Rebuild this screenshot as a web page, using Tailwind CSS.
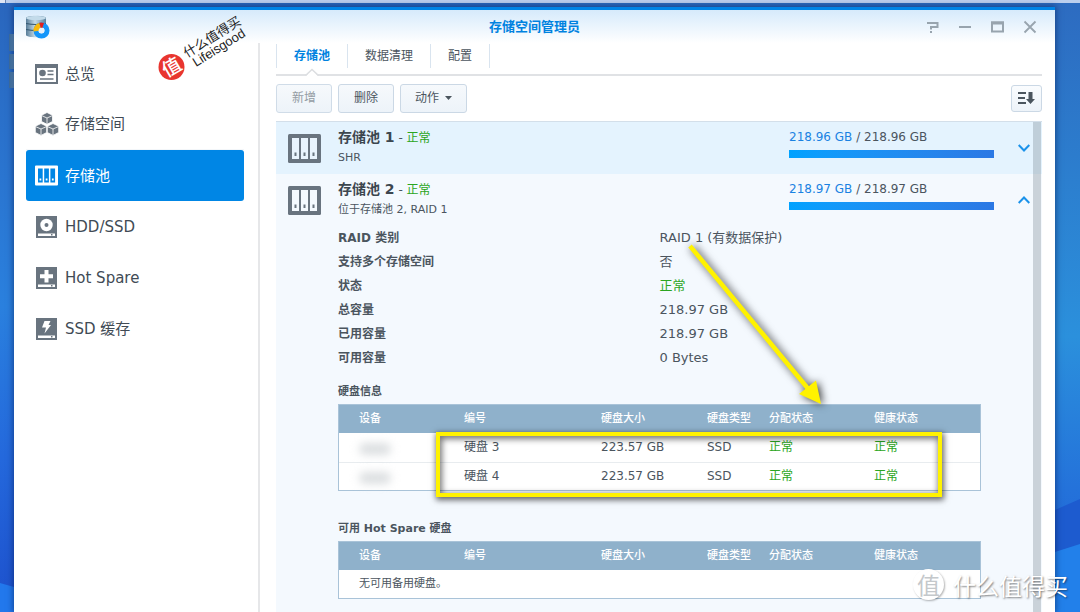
<!DOCTYPE html>
<html lang="zh-CN">
<head>
<meta charset="utf-8">
<meta name="viewport" content="width=device-width, initial-scale=1">
<title>存储空间管理员</title>
<script src="https://cdn.jsdelivr.net/npm/@tailwindcss/browser@4"></script>
</head>
<body class="relative flex h-screen flex-col overflow-hidden bg-[#2a7fdc] font-['DejaVu_Sans','Noto_Sans_CJK_SC',sans-serif] text-xs text-[#4b555e]">

<!-- Desktop wallpaper -->
<svg class="absolute inset-0 h-full w-full" viewBox="0 0 1080 612" preserveAspectRatio="none" aria-hidden="true">
  <defs>
    <linearGradient id="wl" x1="0" y1="0" x2="0" y2="1"><stop offset="0" stop-color="#2a66bd"/><stop offset=".5" stop-color="#2a80de"/><stop offset=".75" stop-color="#2468dc"/><stop offset="1" stop-color="#1d50cc"/></linearGradient>
    <linearGradient id="wr" x1="0" y1="0" x2="0" y2="1"><stop offset="0" stop-color="#2d6bc0"/><stop offset=".55" stop-color="#2b90dc"/><stop offset=".8" stop-color="#2472da"/><stop offset="1" stop-color="#1f5fd6"/></linearGradient>
    <linearGradient id="cyl" x1="0" y1="0" x2="1" y2="0"><stop offset="0" stop-color="#3c6c9c"/><stop offset="1" stop-color="#6d9cc4"/></linearGradient>
  </defs>
  <path fill="url(#wl)" d="M0 0h540v612H0z"/>
  <path fill="url(#wr)" d="M540 0h540v612H540z"/>
  <path fill="#2278ec" d="M0 583l14 4v25H0z"/>
  <path fill="#1d5bcf" d="M1055 510l25-11v46l-25 7z"/>
  <path fill="#2280ea" d="M1055 552l25-8v68h-25z"/>
  <path fill="url(#cyl)" d="M9 34h6v17H9zM9 54h6v15H9zM9 72h6v16H9z"/>
</svg>
<div class="relative flex h-[3px] shrink-0 bg-[#bccfee]"><span class="w-[6px] border-r border-[#6c86b5] bg-[#dfe6f5]"></span></div>

<div class="relative mt-1 mr-[25px] ml-[14px] flex min-h-0 flex-1 flex-col border-t-[3px] border-[#0084e6] bg-white shadow-[0_0_6px_1px_rgba(0,20,70,0.5)]">
  <!-- Title bar -->
  <header class="relative flex h-[33px] shrink-0 items-center justify-between bg-linear-to-b from-[#d6eafb] to-white pr-[18px] pl-3">
    <svg class="h-6 w-6" viewBox="0 0 24 24" aria-hidden="true">
      <defs><linearGradient id="db" x1="0" x2="1" y1="0" y2="0"><stop offset="0" stop-color="#587d98"/><stop offset=".45" stop-color="#c4dae8"/><stop offset="1" stop-color="#5a819d"/></linearGradient></defs>
      <path fill="url(#db)" d="M0 3c0-3 20-3 20 0v17c0 3-20 3-20 0z"/>
      <ellipse cx="10" cy="3" rx="10" ry="2" fill="#c3dbea"/>
      <path d="M0 8.500q10 2 20 0M0 14.500q10 2 20 0" fill="none" stroke="#33566f" stroke-width="1.200"/>
      <circle cx="15.500" cy="15.500" r="5.500" fill="#fff" stroke="#1496fa" stroke-width="5"/>
      <path d="M15.500 15.500L7.500 16.500A8 8 0 0 1 13.300 7.800z" fill="#f8b90c"/>
      <path d="M15.500 15.500L13.300 7.800A8 8 0 0 1 18 8z" fill="#e3201c"/>
      <circle cx="15.500" cy="15.500" r="2.800" fill="#e8f1fa"/>
    </svg>
    <h1 class="absolute inset-x-0 text-center text-[13px] font-bold text-[#0082e0]">存储空间管理员</h1>
    <div class="relative flex items-center gap-[18px] text-[#98a4ae]">
      <button aria-label="帮助"><svg class="block h-[14px] w-[14px]" viewBox="0 0 14 14" fill="none" stroke="currentColor" stroke-width="2"><path d="M0 3h10.500v4H4V9.500M3 12h2"/></svg></button>
      <button aria-label="最小化"><svg class="block h-[14px] w-[14px]" viewBox="0 0 14 14" stroke="currentColor" stroke-width="2"><path d="M0 7h12"/></svg></button>
      <button aria-label="最大化"><svg class="block h-[14px] w-[14px]" viewBox="0 0 14 14" fill="none" stroke="currentColor"><path stroke-width="2" d="M1 2.500h11v9H1z"/><path stroke-width="3" d="M0 3h13"/></svg></button>
      <button aria-label="关闭"><svg class="block h-[14px] w-[14px]" viewBox="0 0 14 14" stroke="currentColor" stroke-width="1.800"><path d="M1.500 1.500l11 11M12.500 1.500l-11 11"/></svg></button>
    </div>
  </header>

  <div class="flex min-h-0 flex-1">
    <!-- Side navigation -->
    <nav class="w-[246px] shrink-0 border-r-2 border-[#e6e7e9] pt-[5px] pr-[14px] pl-3 text-[15px] leading-5 text-[#414b55]">
      <a href="#" class="flex h-[51px] items-center gap-[6px] pl-[9px]">
        <svg class="h-6 w-6" viewBox="0 0 24 24"><path fill="#69747f" d="M0 2h23v20H0z"/><path fill="#fff" d="M2 6h19v14H2z"/><circle cx="7.500" cy="11" r="3.300" fill="#69747f"/><path stroke="#69747f" stroke-width="1.600" d="M12.500 9h6M12.500 12.500h6M5 17h13.500"/></svg>总览</a>
      <a href="#" class="flex h-[51px] items-center gap-[6px] border-b border-[#f3f6f9] pl-[9px]">
        <svg class="h-6 w-6" viewBox="0 0 24 24"><g fill="#69747f" stroke="#fff" stroke-width=".8" stroke-linejoin="round">
          <path d="M12 .5l5.500 2.700v6.300L12 12.300 6.500 9.500V3.200z"/><path fill="none" d="M6.500 3.500L12 6l5.500-2.500M12 6v6"/>
          <path d="M6 11.500l5.700 2.700v6.300L6 23.400.3 20.500v-6.300z"/><path fill="none" d="M.3 14.500L6 17l5.700-2.500M6 17v6"/>
          <path d="M18 11.500l5.700 2.700v6.300L18 23.400l-5.700-2.900v-6.300z"/><path fill="none" d="M12.300 14.500L18 17l5.700-2.500M18 17v6"/></g></svg>存储空间</a>
      <a href="#" aria-current="page" class="flex h-[51px] items-center gap-[6px] rounded-[3px] bg-[#0086e5] pl-[9px] text-white">
        <svg class="h-6 w-6" viewBox="0 0 24 24"><path fill="#fff" d="M1 1.500h21a1 1 0 0 1 1 1v18a1 1 0 0 1-1 1H1a1 1 0 0 1-1-1v-18a1 1 0 0 1 1-1z"/><path fill="#0086e5" d="M3 4.500h4.700v14H3zM9.200 4.500h4.700v14H9.200zM15.400 4.500h4.700v14h-4.700z"/><path fill="#fff" d="M4.500 14.500h1.800v2H4.500zM10.700 14.500h1.800v2h-1.800zM16.900 14.500h1.800v2h-1.800z"/></svg>存储池</a>
      <a href="#" class="flex h-[51px] items-center gap-[6px] pl-[9px]">
        <svg class="h-6 w-6" viewBox="0 0 24 24"><path fill="#69747f" d="M1 1h21v22H1z"/><circle cx="11.500" cy="10" r="6.200" fill="#fff"/><circle cx="11.500" cy="10" r="2" fill="#69747f"/><path fill="#fff" d="M3 18.500h17v2.500H3z"/><path fill="#69747f" d="M16 19h1.500v1.500H16z"/></svg>HDD/SSD</a>
      <a href="#" class="flex h-[51px] items-center gap-[6px] pl-[9px]">
        <svg class="h-6 w-6" viewBox="0 0 24 24"><path fill="#69747f" d="M1 1h21v22H1z"/><path fill="#fff" d="M9.500 4h4v4.200H18v4h-4.500V16.500h-4v-4.300H5v-4h4.500zM3 18.500h17v2.500H3z"/><path fill="#69747f" d="M16 19h1.500v1.500H16z"/></svg>Hot Spare</a>
      <a href="#" class="flex h-[51px] items-center gap-[6px] pl-[9px]">
        <svg class="h-6 w-6" viewBox="0 0 24 24"><path fill="#69747f" d="M1 1h21v22H1z"/><path fill="#fff" d="M9.500 4h6l-2 4H16l-6.500 8.500 1.500-6H7zM3 18.500h17v2.500H3z"/><path fill="#69747f" d="M16 19h1.500v1.500H16z"/></svg>SSD 缓存</a>
    </nav>

    <main class="flex min-w-0 flex-1 flex-col pr-[13px] pl-4">
      <!-- Tabs -->
      <div role="tablist" class="relative flex h-[33px] shrink-0 items-start border-b-2 border-[#e0e2e5] pt-px">
        <button role="tab" aria-selected="true" class="h-6 border-x border-[#d9e4ef] px-[17px] font-bold text-[#0082e0]">存储池</button>
        <button role="tab" aria-selected="false" class="h-6 border-r border-[#d9e4ef] px-[17px]">数据清理</button>
        <button role="tab" aria-selected="false" class="h-6 border-r border-[#d9e4ef] px-[17px]">配置</button>
        <svg class="absolute -bottom-[2px] left-[28px] h-2 w-4" viewBox="0 0 16 8" aria-hidden="true"><path fill="#fff" d="M2 8l6-6 6 6z"/><path fill="none" stroke="#dcdee1" stroke-width="1.500" d="M1.500 7.500L8 1.500l6.500 6"/></svg>
      </div>

      <!-- Toolbar -->
      <div class="flex h-[45px] shrink-0 items-center gap-[6px] pb-px">
        <button disabled class="h-[29px] w-14 rounded-[3px] border border-[#d0dce8] bg-linear-to-b from-[#f6f9fc] to-[#edf3f9] text-[#949ca4]">新增</button>
        <button class="h-[29px] w-14 rounded-[3px] border border-[#cbd8e5] bg-linear-to-b from-[#f6f9fc] to-[#edf3f9]">删除</button>
        <button class="flex h-[29px] w-[67px] items-center justify-center gap-[6px] rounded-[3px] border border-[#cbd8e5] bg-linear-to-b from-[#f6f9fc] to-[#edf3f9]">动作<svg class="h-1 w-[7px]" viewBox="0 0 7 4"><path fill="#4b555e" d="M0 0h7L3.500 4z"/></svg></button>
        <button aria-label="排序" class="ml-auto flex h-[27px] w-[31px] items-center justify-center rounded-[3px] border border-[#cbd8e5] bg-linear-to-b from-[#fafcfe] to-[#edf3f9]"><svg class="h-4 w-[17px]" viewBox="0 0 17 16"><path stroke="#4b555e" stroke-width="2" d="M0 3h8M0 8h7M0 13h8"/><path fill="#4b555e" d="M10.500 2h4v7H17l-4.500 5L8 9h2.500z"/></svg></button>
      </div>

      <!-- Pool list -->
      <div class="relative min-h-0 flex-1 overflow-hidden border-t border-[#d3dfea] bg-[#f4f9fe]">
        <section class="flex h-[52px] items-center bg-[#e4f3fe] pr-3 pl-3">
          <svg class="mr-[17px] h-[29px] w-[33px] shrink-0" viewBox="0 0 33 29" aria-hidden="true"><rect width="33" height="29" rx="1.500" fill="#69747f"/><path fill="#e9f4fd" d="M4 4h7v21H4zM13 4h7v21h-7zM22 4h7v21h-7z"/><path fill="#69747f" d="M6.500 18.500h2V22h-2zM15.500 18.500h2V22h-2zM24.500 18.500h2V22h-2z"/></svg>
          <div class="flex-1 pb-[2px]">
            <h2 class="h-[21px] leading-5"><span class="text-sm leading-5 font-bold text-[#3c464f]">存储池 1</span> - <span class="text-[#2ba521]">正常</span></h2>
            <p class="h-5 text-[11px] leading-5">SHR</p>
          </div>
          <div class="mr-6 w-[205px]">
            <p class="leading-5"><span class="text-[#1a82e2]">218.96 GB</span> / 218.96 GB</p>
            <div class="mt-[3px] mb-3 h-2 bg-linear-to-r from-[#00a2ff] to-[#2b78e4]"></div>
          </div>
          <button aria-label="展开存储池 1"><svg class="block h-2 w-3" viewBox="0 0 12 8" fill="none" stroke="#1a92ea" stroke-width="2"><path d="M.7 1L6 6.500 11.300 1"/></svg></button>
        </section>

        <section class="flex h-[52px] items-center pr-3 pl-3">
          <svg class="mr-[17px] h-[29px] w-[33px] shrink-0" viewBox="0 0 33 29" aria-hidden="true"><rect width="33" height="29" rx="1.500" fill="#69747f"/><path fill="#f4f9fe" d="M4 4h7v21H4zM13 4h7v21h-7zM22 4h7v21h-7z"/><path fill="#69747f" d="M6.500 18.500h2V22h-2zM15.500 18.500h2V22h-2zM24.500 18.500h2V22h-2z"/></svg>
          <div class="flex-1 pb-[2px]">
            <h2 class="h-[21px] leading-5"><span class="text-sm leading-5 font-bold text-[#3c464f]">存储池 2</span> - <span class="text-[#2ba521]">正常</span></h2>
            <p class="h-5 text-[11px] leading-5">位于存储池 2, RAID 1</p>
          </div>
          <div class="mr-6 w-[205px]">
            <p class="leading-5"><span class="text-[#1a82e2]">218.97 GB</span> / 218.97 GB</p>
            <div class="mt-[3px] mb-3 h-2 bg-linear-to-r from-[#00a2ff] to-[#2b78e4]"></div>
          </div>
          <button aria-label="收起存储池 2"><svg class="block h-2 w-3" viewBox="0 0 12 8" fill="none" stroke="#1a92ea" stroke-width="2"><path d="M.7 7L6 1.500 11.300 7"/></svg></button>
        </section>

        <div class="pr-[61px] pl-[62px]">
          <dl class="grid auto-rows-[24px] grid-cols-2 items-center">
            <dt class="font-bold">RAID 类别</dt><dd class="text-[13px]">RAID 1 (有数据保护)</dd>
            <dt class="font-bold">支持多个存储空间</dt><dd class="text-[13px]">否</dd>
            <dt class="font-bold">状态</dt><dd class="text-[13px] text-[#2ba521]">正常</dd>
            <dt class="font-bold">总容量</dt><dd class="text-[13px]">218.97 GB</dd>
            <dt class="font-bold">已用容量</dt><dd class="text-[13px]">218.97 GB</dd>
            <dt class="font-bold">可用容量</dt><dd class="text-[13px]">0 Bytes</dd>
          </dl>

          <h3 class="mt-[10px] h-6 text-[11px] leading-6 font-bold">硬盘信息</h3>
          <div class="border border-[#a9c3d8]">
            <table class="w-full table-fixed bg-white text-left whitespace-nowrap">
              <colgroup><col class="w-[105px]"><col class="w-[137px]"><col class="w-[106px]"><col class="w-[62px]"><col class="w-[105px]"><col></colgroup>
              <thead><tr class="h-7 bg-[#8fb1cb] text-[11px] text-white"><th class="pl-5 font-medium">设备</th><th class="pl-5 font-medium">编号</th><th class="pl-5 font-medium">硬盘大小</th><th class="pl-5 font-medium">硬盘类型</th><th class="pl-5 font-medium">分配状态</th><th class="pl-5 font-medium">健康状态</th></tr></thead>
              <tbody>
                <tr class="h-[29px] border-b border-[#e8ecef]"><td class="pl-5"><span class="mt-1 block h-3 w-8 rounded-full bg-[#dcdfe1] blur-[4px]"></span></td><td class="pl-5">硬盘 3</td><td class="pl-5">223.57 GB</td><td class="pl-5">SSD</td><td class="pl-5 text-[#2ba521]">正常</td><td class="pl-5 text-[#2ba521]">正常</td></tr>
                <tr class="h-7"><td class="pl-5"><span class="mt-1 block h-3 w-8 rounded-full bg-[#dcdfe1] blur-[4px]"></span></td><td class="pl-5">硬盘 4</td><td class="pl-5">223.57 GB</td><td class="pl-5">SSD</td><td class="pl-5 text-[#2ba521]">正常</td><td class="pl-5 text-[#2ba521]">正常</td></tr>
              </tbody>
            </table>
          </div>

          <h3 class="mt-[26px] h-6 text-[11px] leading-6 font-bold">可用 Hot Spare 硬盘</h3>
          <div class="border border-[#a9c3d8]">
            <table class="w-full table-fixed bg-white text-left whitespace-nowrap">
              <colgroup><col class="w-[105px]"><col class="w-[137px]"><col class="w-[106px]"><col class="w-[62px]"><col class="w-[105px]"><col></colgroup>
              <thead><tr class="h-7 bg-[#8fb1cb] text-[11px] text-white"><th class="pl-5 font-medium">设备</th><th class="pl-5 font-medium">编号</th><th class="pl-5 font-medium">硬盘大小</th><th class="pl-5 font-medium">硬盘类型</th><th class="pl-5 font-medium">分配状态</th><th class="pl-5 font-medium">健康状态</th></tr></thead>
              <tbody><tr class="h-7"><td colspan="6" class="pl-5 text-[11px]">无可用备用硬盘。</td></tr></tbody>
            </table>
          </div>
        </div>
        <!-- Scrollbar thumb -->
        <div class="absolute inset-y-0 right-px w-2 bg-[#7b8a96]/35"></div>
      </div>
    </main>
  </div>
</div>

<!-- Annotations drawn over the window -->
<div class="absolute top-[432px] left-[436px] h-[65px] w-[506px] border-4 border-[#fff200] shadow-[1px_2px_6px_1px_rgba(0,0,0,0.6),inset_1px_2px_6px_1px_rgba(0,0,0,0.55)]"></div>
<svg class="absolute top-[236px] left-[680px] h-[180px] w-[160px] drop-shadow-[2px_1px_4px_rgba(0,0,0,0.8)]" viewBox="0 0 160 180" aria-hidden="true"><path fill="none" stroke="#fff200" stroke-width="4.500" d="M10 10l120 145"/><path fill="#fff200" d="M141 168l-22-10 17-13.500z"/></svg>

<svg class="absolute top-0 left-[150px] h-[90px] w-[110px] font-['Liberation_Sans','Noto_Sans_CJK_SC',sans-serif]" viewBox="0 0 110 90">
  <circle cx="21.500" cy="67" r="13" fill="#e8352f"/>
  <text transform="translate(21.500 67) rotate(-30)" text-anchor="middle" y="7" font-size="19" font-weight="500" fill="#fff">值</text>
  <text transform="translate(37 58) rotate(-32)" font-size="13" fill="#222">什么值得买</text>
  <text transform="translate(46 67) rotate(-32)" font-size="13" fill="#222">Lifeisgood</text>
</svg>
<div class="absolute right-3 bottom-3 flex items-center gap-[9px] font-['Noto_Sans_CJK_SC',sans-serif] text-white">
  <span class="flex h-[31px] w-[31px] items-center justify-center rounded-full bg-white text-[23px] leading-none text-[#c4c8cb] shadow-[1px_1px_2px_rgba(0,0,0,0.3)]">值</span>
  <span class="text-[23px] leading-7 [text-shadow:1px_1px_2px_rgba(0,0,0,0.5)]">什么值得买</span>
</div>
</body>
</html>
